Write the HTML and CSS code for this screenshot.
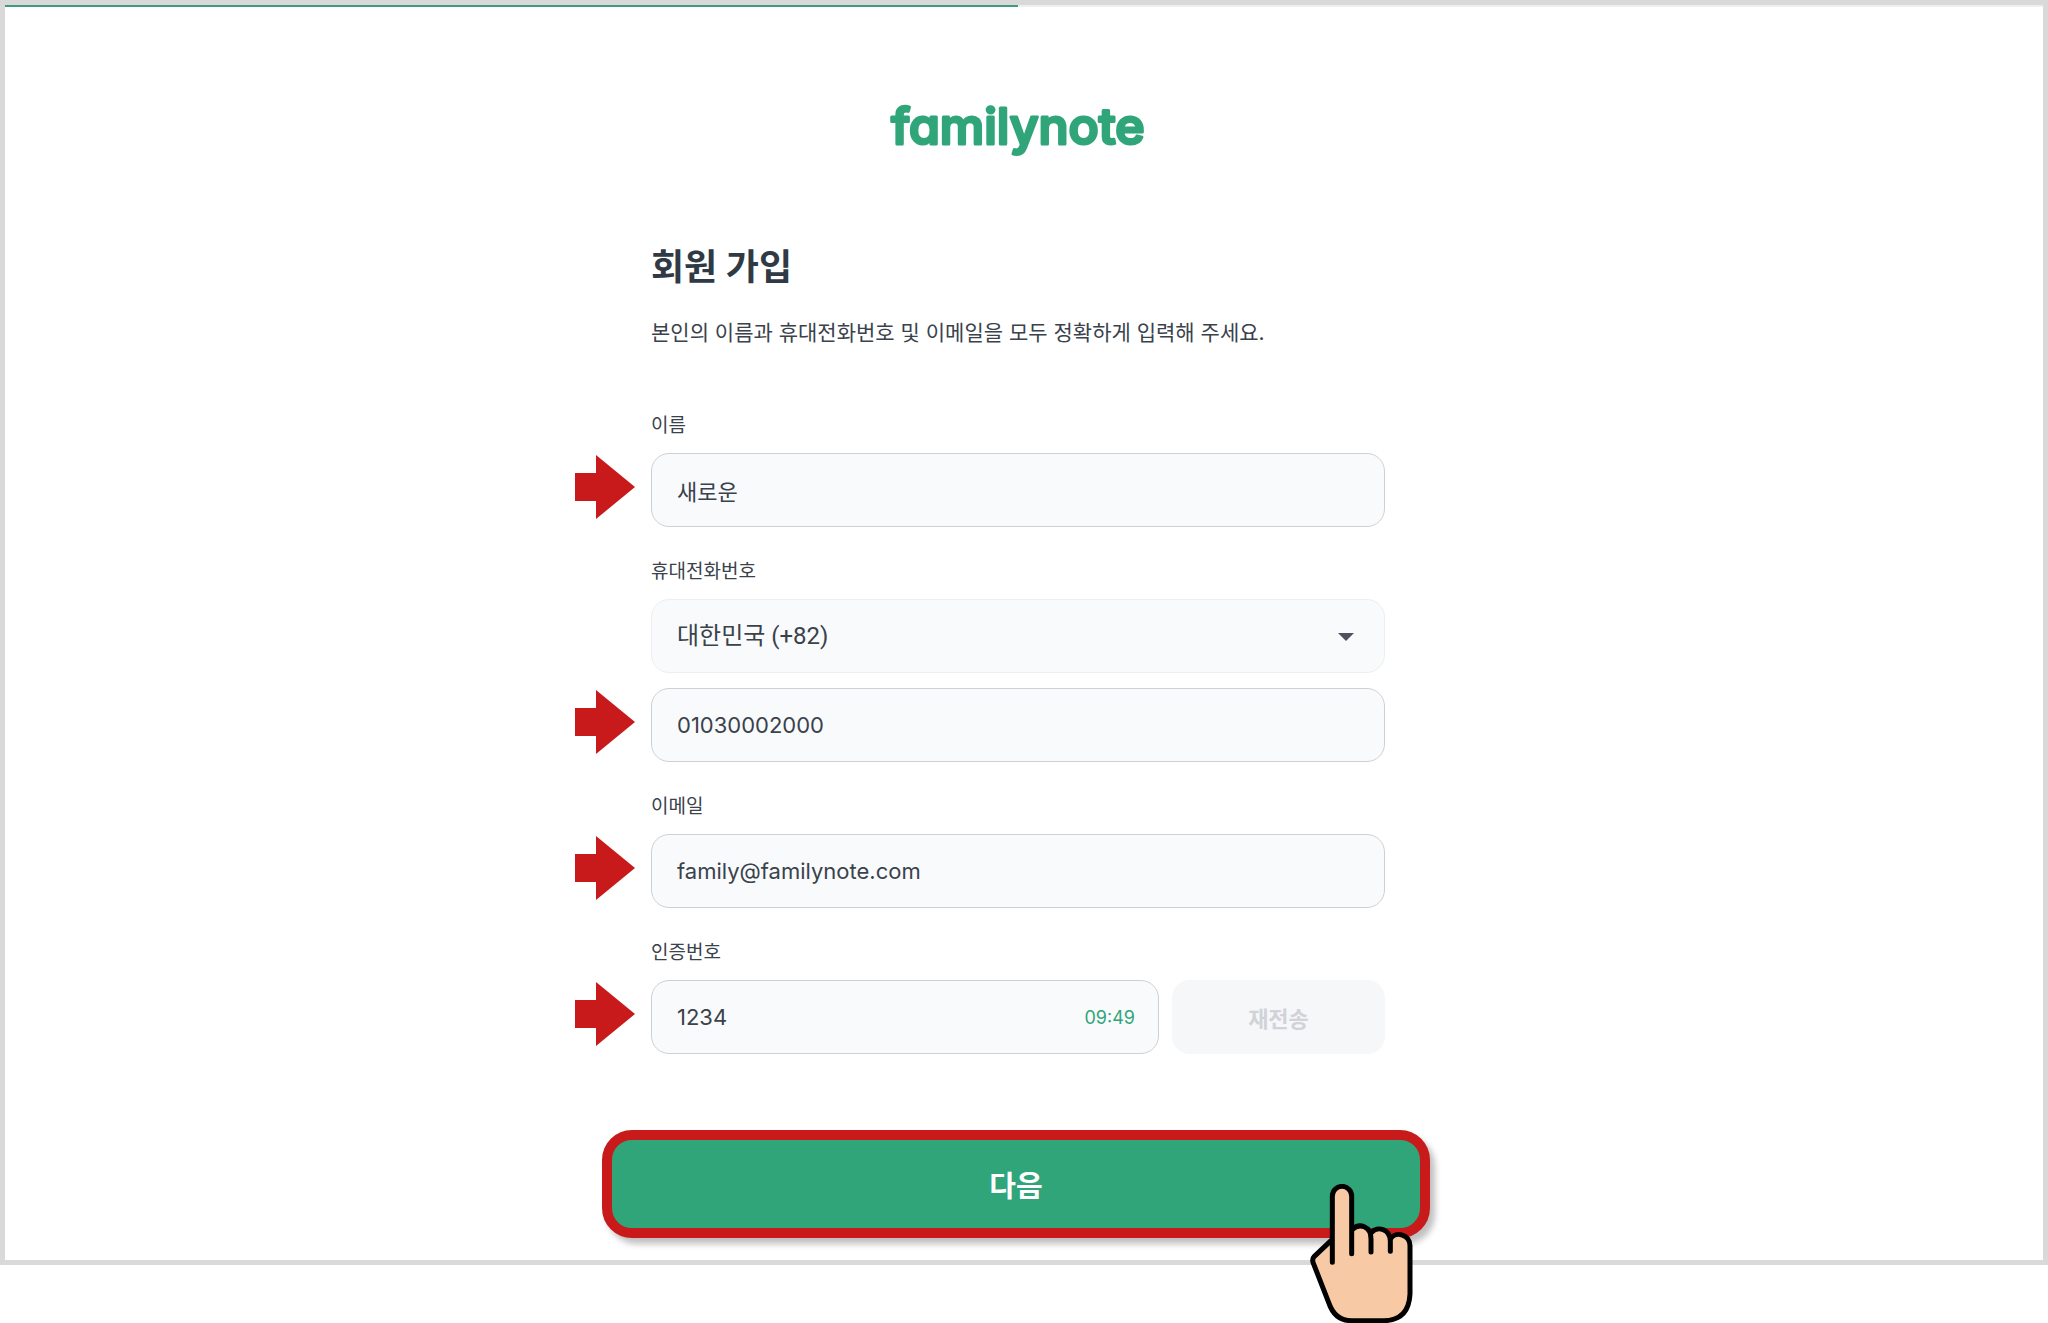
FILE: index.html
```html
<!DOCTYPE html>
<html lang="ko">
<head>
  <meta charset="UTF-8">
  <title>familynote 회원 가입</title>
  <link rel="stylesheet" href="styles.css">
</head>
<body>

  <div class="page">
    <div class="progress"><div class="progress-bar"></div></div>

    <form class="signup">
      <svg class="logo" width="276" height="64" viewBox="0 0 276 64" role="img" aria-label="familynote">
        <text x="138" y="49" text-anchor="middle">familynote</text>
      </svg>

      <h1>회원 가입</h1>
      <p class="desc">본인의 이름과 휴대전화번호 및 이메일을 모두 정확하게 입력해 주세요.</p>

      <label for="name">이름</label>
      <div class="field">
        <svg class="arrow" viewBox="0 0 60 64"><path d="M0 18h21V0l39 32-39 32V46H0z"/></svg>
        <input type="text" id="name" value="새로운">
      </div>

      <label for="phone">휴대전화번호</label>
      <div class="field country">
        <select aria-label="국가 번호">
          <option>대한민국 (+82)</option>
        </select>
        <svg class="caret" viewBox="0 0 16 8"><path d="M0 0h16L8 8z"/></svg>
      </div>
      <div class="field">
        <svg class="arrow" viewBox="0 0 60 64"><path d="M0 18h21V0l39 32-39 32V46H0z"/></svg>
        <input type="tel" id="phone" value="01030002000">
      </div>

      <label for="email">이메일</label>
      <div class="field">
        <svg class="arrow" viewBox="0 0 60 64"><path d="M0 18h21V0l39 32-39 32V46H0z"/></svg>
        <input type="email" id="email" value="family@familynote.com">
      </div>

      <label for="code">인증번호</label>
      <div class="field code-row">
        <svg class="arrow" viewBox="0 0 60 64"><path d="M0 18h21V0l39 32-39 32V46H0z"/></svg>
        <div class="code">
          <input type="text" id="code" value="1234">
          <span class="timer">09:49</span>
        </div>
        <button type="button" class="resend" disabled>재전송</button>
      </div>

      <div class="next-wrap">
        <button type="button" class="next">다음</button>
        <svg class="hand" viewBox="90 220 309 417">
          <path class="skin" d="M157 388V256a29 29 0 0 1 58 0V360C235 335 270 345 273 366C290 345 325 350 331 380C345 358 390 365 390 405V550Q390 630 310 630H215Q165 630 147 578L99 455Q96 444 103 437Z"/>
          <path class="line" d="M157 455V256a29 29 0 0 1 58 0V429"/>
          <path class="line" d="M217 356C238 336 273 346 273 385V424"/>
          <path class="line" d="M274 366C292 345 331 354 331 392V422"/>
          <path class="line" d="M332 384C348 360 390 372 390 405V550Q386 630 310 630H215Q165 630 147 578L99 455Q96 444 103 437L153 390"/>
        </svg>
      </div>
    </form>
  </div>

</body>
</html>
```

FILE: styles.css
```css
* {
  box-sizing: border-box;
}

body {
  margin: 0;
  padding-bottom: 58px;
  background: #fff;
  color: #3a424c;
  font-family: Inter, "Noto Sans CJK KR", sans-serif;
}

.page {
  border: 5px solid #d9d9d9;
  padding-bottom: 22px;
}

.progress {
  height: 2px;
  background: #eef0f0;
}

.progress-bar {
  width: calc(50% - 6px);
  height: 2px;
  background: #3f9c78;
}

.signup {
  width: 734px;
  margin: 0 auto;
  padding-top: 88px;
  position: relative;
  right: 6px;
}

.logo {
  display: block;
  margin: 0 auto 83px;
}

.logo text {
  font-family: Inter, sans-serif;
  font-size: 50px;
  font-weight: 500;
  font-feature-settings: "cv11";
  fill: #31a57a;
  stroke: #31a57a;
  stroke-width: 3px;
  stroke-linejoin: round;
}

h1 {
  margin: 0 0 26px;
  color: #303a45;
  font-size: 36px;
  line-height: 50px;
  font-weight: 700;
}

.desc {
  margin: 0 0 63px;
  font-size: 21px;
  line-height: 30px;
}

label {
  display: block;
  margin-bottom: 12px;
  font-size: 19px;
  line-height: 30px;
}

.field {
  position: relative;
  margin-bottom: 30px;
}

.field input,
.field select {
  display: block;
  width: 100%;
  height: 74px;
  padding: 0 25px;
  border: 1px solid #cdd1d5;
  border-radius: 18px;
  background: #f9fafc;
  color: #3a424c;
  font-family: inherit;
  font-size: 22px;
}

.field select {
  appearance: none;
  border-color: #eceef0;
  font-family: Roboto, "Noto Sans CJK KR", sans-serif;
  font-size: 24px;
}

.country {
  margin-bottom: 15px;
}

.caret {
  position: absolute;
  right: 31px;
  top: 34px;
  width: 16px;
  height: 8px;
  fill: #4d5160;
}

/* red pointers beside the fields */
.arrow {
  position: absolute;
  right: 100%;
  top: 2px;
  width: 60px;
  height: 64px;
  margin-right: 16px;
  fill: #c81a1a;
}

.code-row {
  display: flex;
  gap: 13px;
  margin-bottom: 76px;
}

.code {
  flex: 1;
  position: relative;
}

.timer {
  position: absolute;
  right: 24px;
  top: 23px;
  color: #31a57a;
  font-size: 18px;
  line-height: 30px;
}

.resend {
  width: 213px;
  border: none;
  border-radius: 18px;
  background: #f6f7f9;
  color: #d0d3d7;
  font-family: inherit;
  font-size: 22px;
  font-weight: 700;
}

.next-wrap {
  position: relative;
  margin: 0 -45px 0 -49px;
}

.next {
  display: block;
  width: 100%;
  height: 108px;
  border: 10px solid #c81a1a;
  border-radius: 30px;
  background: #31a57a;
  box-shadow: 5px 6px 6px rgba(0, 0, 0, 0.25);
  color: #fff;
  font-family: inherit;
  font-size: 29px;
  font-weight: 600;
}

.hand {
  position: absolute;
  right: 17px;
  top: 54px;
  width: 103px;
  height: 139px;
}

.skin {
  fill: #f7c9a4;
}

.line {
  fill: none;
  stroke: #000;
  stroke-width: 15;
  stroke-linecap: round;
  stroke-linejoin: round;
}
```
